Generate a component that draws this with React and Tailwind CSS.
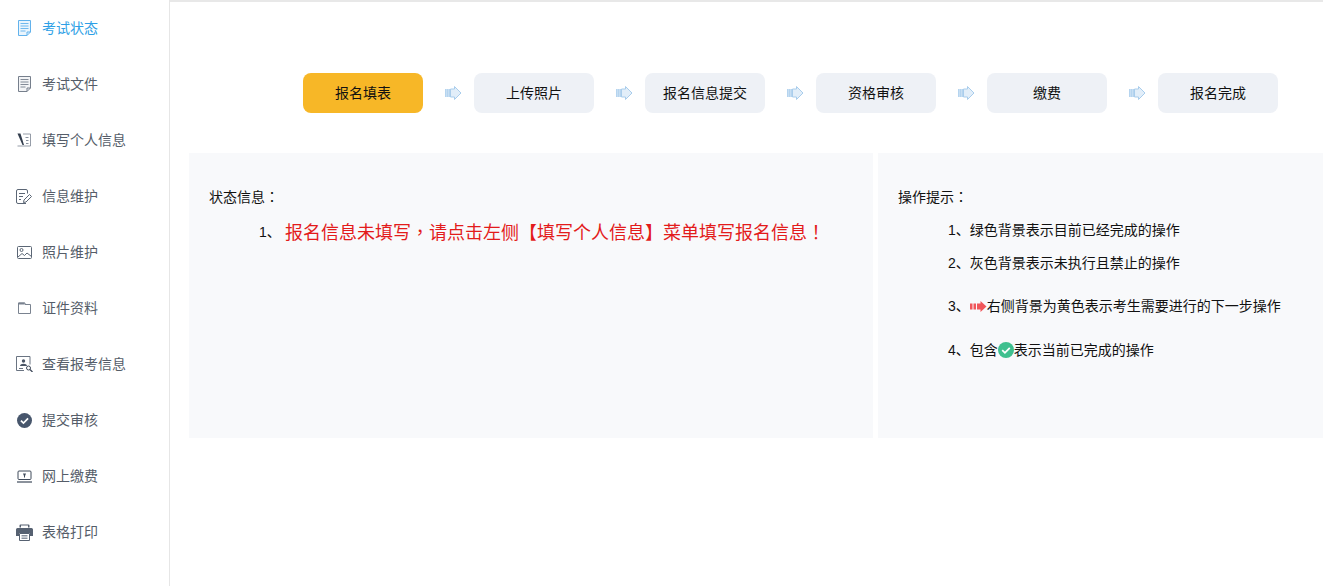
import React from 'react';

const FONT = "font-['Liberation_Sans','Noto_Sans_CJK_SC',sans-serif]";

// the reference centres full-width punctuation in its cell, the TC cut does that too
function Punct({ children }) {
  return <span className="font-['Noto_Sans_CJK_TC',sans-serif]">{children}</span>;
}

function DocIcon({ color, fill }) {
  return (
    <svg width="13" height="16" viewBox="0 0 13 16" fill="none" stroke={color} strokeWidth="1">
      <path d="M0.500 0.500h12v11.500l-3.500 3.500h-8.500z" fill={fill} />
      <path d="M9 15.500v-3.500h3.500" />
      <path d="M2.500 3.500h8M2.500 6h8M2.500 8.500h8M2.500 11h5" strokeWidth="0.900" />
    </svg>
  );
}

function FormIcon() {
  return (
    <svg width="14" height="14" viewBox="0 0 14 14" fill="none" stroke="#8a929e">
      <path d="M6 1h7.500v12h-13" strokeWidth="0.900" />
      <path d="M0.500 0.500h3l3.500 11.500h-1.500z" fill="#323d4d" stroke="none" />
      <path d="M8.500 4.500h3M9 7.500h2.500M9 10.500h2.500" strokeWidth="1" />
    </svg>
  );
}

function EditIcon() {
  return (
    <svg width="16" height="15" viewBox="0 0 16 15" fill="none" stroke="#5b6675" strokeWidth="1">
      <path d="M11.500 4.500v-2.500a1.500 1.500 0 0 0-1.500-1.500h-8a1.500 1.500 0 0 0-1.500 1.500v11a1.500 1.500 0 0 0 1.500 1.500h8" />
      <path d="M3 4.500h6M3 7.500h4M3 10.500h2" />
      <path d="M7.500 13.500l.5-2.500 5.500-5.500 2 2-5.500 5.500z" />
    </svg>
  );
}

function PhotoIcon() {
  return (
    <svg width="15" height="13" viewBox="0 0 15 13" fill="none" stroke="#5b6675" strokeWidth="1">
      <rect x="0.500" y="0.500" width="14" height="12" rx="1" />
      <circle cx="4.500" cy="4" r="1.500" />
      <path d="M1 11l4-3.500 2.500 2 2.500-2.500 4.500 3.500" />
    </svg>
  );
}

function FolderIcon() {
  return (
    <svg width="13" height="12" viewBox="0 0 13 12" fill="none" stroke="#7a8390" strokeWidth="1">
      <path d="M0.500 1v10.500h12v-9h-5.500v-1.500z" />
      <path d="M0.500 1.500h6" strokeWidth="2" />
    </svg>
  );
}

function ProfileIcon() {
  return (
    <svg width="17" height="16" viewBox="0 0 17 16" fill="none" stroke="#6a7482" strokeWidth="1">
      <path d="M8 14.500h-7.500v-14h13.500v8" />
      <circle cx="7.500" cy="5" r="1.700" fill="#4b5666" stroke="none" />
      <path d="M4 10c0-3 7-3 7 0z" fill="#4b5666" stroke="none" />
      <path d="M3 12.500h4" />
      <circle cx="12.500" cy="12" r="2" stroke="#3f4a5a" />
      <path d="M14 13.500l2.500 2.500" stroke="#3f4a5a" strokeWidth="1.300" />
    </svg>
  );
}

function CheckIcon({ size, color }) {
  return (
    <svg width={size} height={size} viewBox="0 0 16 16" className="shrink-0">
      <circle cx="8" cy="8" r="8" fill={color} />
      <path d="M4.200 8.200l2.700 2.600 4.900-5" fill="none" stroke="#fff" strokeWidth="1.800" />
    </svg>
  );
}

function PayIcon() {
  return (
    <svg width="15" height="13" viewBox="0 0 15 13" fill="none" stroke="#3f4a5a">
      <rect x="1" y="1" width="13" height="8.500" rx="1" strokeWidth="1" />
      <path d="M6 3.500h3l-1 2.500v1.500h-1v-1.500z" fill="#3f4a5a" stroke="none" />
      <path d="M0 12h15" strokeWidth="1.200" />
    </svg>
  );
}

function PrintIcon() {
  return (
    <svg width="17" height="17" viewBox="0 0 17 17">
      <path d="M3.500 3.500v-2a1 1 0 0 1 1-1h8a1 1 0 0 1 1 1v2h-1.500v-2h-7v2z" fill="#566171" />
      <path d="M1.500 4h14a1.500 1.500 0 0 1 1.500 1.500v6.500h-3v-3h-11v3h-3v-6.500a1.500 1.500 0 0 1 1.500-1.500z" fill="#566171" />
      <path d="M3.500 9.500h10v7h-10z" fill="#fff" stroke="#566171" />
      <path d="M5.500 11.500h6M5.500 13h6M5.500 14.500h6" stroke="#8a929e" />
    </svg>
  );
}

function StepArrow() {
  return (
    <svg width="17" height="14" viewBox="0 0 17 14" className="shrink-0">
      <path d="M0 3h5.500v8h-5.500z" fill="#b5d4ef" />
      <path d="M1.500 3v8M3.500 3v8" stroke="#d5e6f5" strokeWidth="0.600" />
      <path d="M5.500 3h4v-2.500l6.500 6.500-6.500 6.500v-2.500h-4z" fill="#e2eef9" stroke="#a9cdec" />
    </svg>
  );
}

function RedArrow() {
  return (
    <svg width="17" height="11" viewBox="0 0 17 11" className="shrink-0">
      <path d="M0 2.500h2.500v6h-2.500zM3.500 2.500h2.500v6h-2.500z" fill="#f0565a" />
      <path d="M7 2.500h3.500v-2.500l6 5.500-6 5.500v-2.500h-3.500z" fill="#f0565a" />
    </svg>
  );
}

const MENU = [
  { label: '考试状态', icon: <DocIcon color="#62b2ec" fill="#eaf5fd" />, active: true },
  { label: '考试文件', icon: <DocIcon color="#767f8c" fill="#f3f4f6" /> },
  { label: '填写个人信息', icon: <FormIcon /> },
  { label: '信息维护', icon: <EditIcon /> },
  { label: '照片维护', icon: <PhotoIcon /> },
  { label: '证件资料', icon: <FolderIcon /> },
  { label: '查看报考信息', icon: <ProfileIcon /> },
  { label: '提交审核', icon: <CheckIcon size={15} color="#47566c" /> },
  { label: '网上缴费', icon: <PayIcon /> },
  { label: '表格打印', icon: <PrintIcon /> },
];

const STEPS = ['报名填表', '上传照片', '报名信息提交', '资格审核', '缴费', '报名完成'];

export default function App() {
  return (
    <div className={`${FONT} flex h-[586px] w-[1323px] overflow-hidden bg-white text-[14px] text-[#111] [text-spacing-trim:space-all]`}>
      {/* Sidebar */}
      <ul className="h-full w-[170px] shrink-0 border-r border-[#e6e6e6]">
        {MENU.map((item) => (
          <li
            key={item.label}
            className={`flex h-[56px] items-center ${item.active ? 'text-[#2d9fe6]' : 'text-[#555d69]'}`}
          >
            <span className="flex w-[42px] shrink-0 justify-center pl-[6px]">{item.icon}</span>
            {item.label}
          </li>
        ))}
      </ul>

      <div className="min-w-0 flex-1">
        <div className="h-[2px] bg-[#e8e8e8]" />

        {/* Steps */}
        <div className="mt-[71px] flex items-center pl-[133px]">
          {STEPS.map((step, i) => (
            <React.Fragment key={step}>
              {i > 0 && (
                <span className="flex w-[51px] justify-center pb-[1px] pl-[9px]">
                  <StepArrow />
                </span>
              )}
              <div
                className={`flex h-[40px] w-[120px] items-center justify-center rounded-lg ${
                  i === 0 ? 'bg-[#f7b727]' : 'bg-[#eef1f6]'
                }`}
              >
                {step}
              </div>
            </React.Fragment>
          ))}
        </div>

        {/* Panels */}
        <div className="mt-[40px] ml-[19px] flex h-[285px] gap-[5px]">
          <div className="w-[684px] bg-[#f8f9fb] pt-[34px] pl-[20px]">
            <p className="leading-[18px]">状态信息<Punct>：</Punct></p>
            <p className="mt-[12px] flex items-center pl-[50px] leading-[26px]">
              <span className="w-[26px] shrink-0">1、</span>
              <span className="text-[18px] text-[#e31b1b]">
                报名信息未填写<Punct>，</Punct>请点击左侧【填写个人信息】菜单填写报名信息<Punct>！</Punct>
              </span>
            </p>
          </div>
          <div className="flex-1 bg-[#f8f9fb] pt-[34px] pl-[20px]">
            <p className="leading-[18px]">操作提示<Punct>：</Punct></p>
            <div className="pl-[50px]">
              <p className="mt-[15px] leading-[18px]">1、绿色背景表示目前已经完成的操作</p>
              <p className="mt-[15px] leading-[18px]">2、灰色背景表示未执行且禁止的操作</p>
              <p className="mt-[25px] flex items-center leading-[18px]">
                3、
                <RedArrow />
                右侧背景为黄色表示考生需要进行的下一步操作
              </p>
              <p className="mt-[26px] flex items-center leading-[18px]">
                4、包含
                <CheckIcon size={16} color="#3fc08f" />
                表示当前已完成的操作
              </p>
            </div>
          </div>
        </div>
      </div>
    </div>
  );
}
